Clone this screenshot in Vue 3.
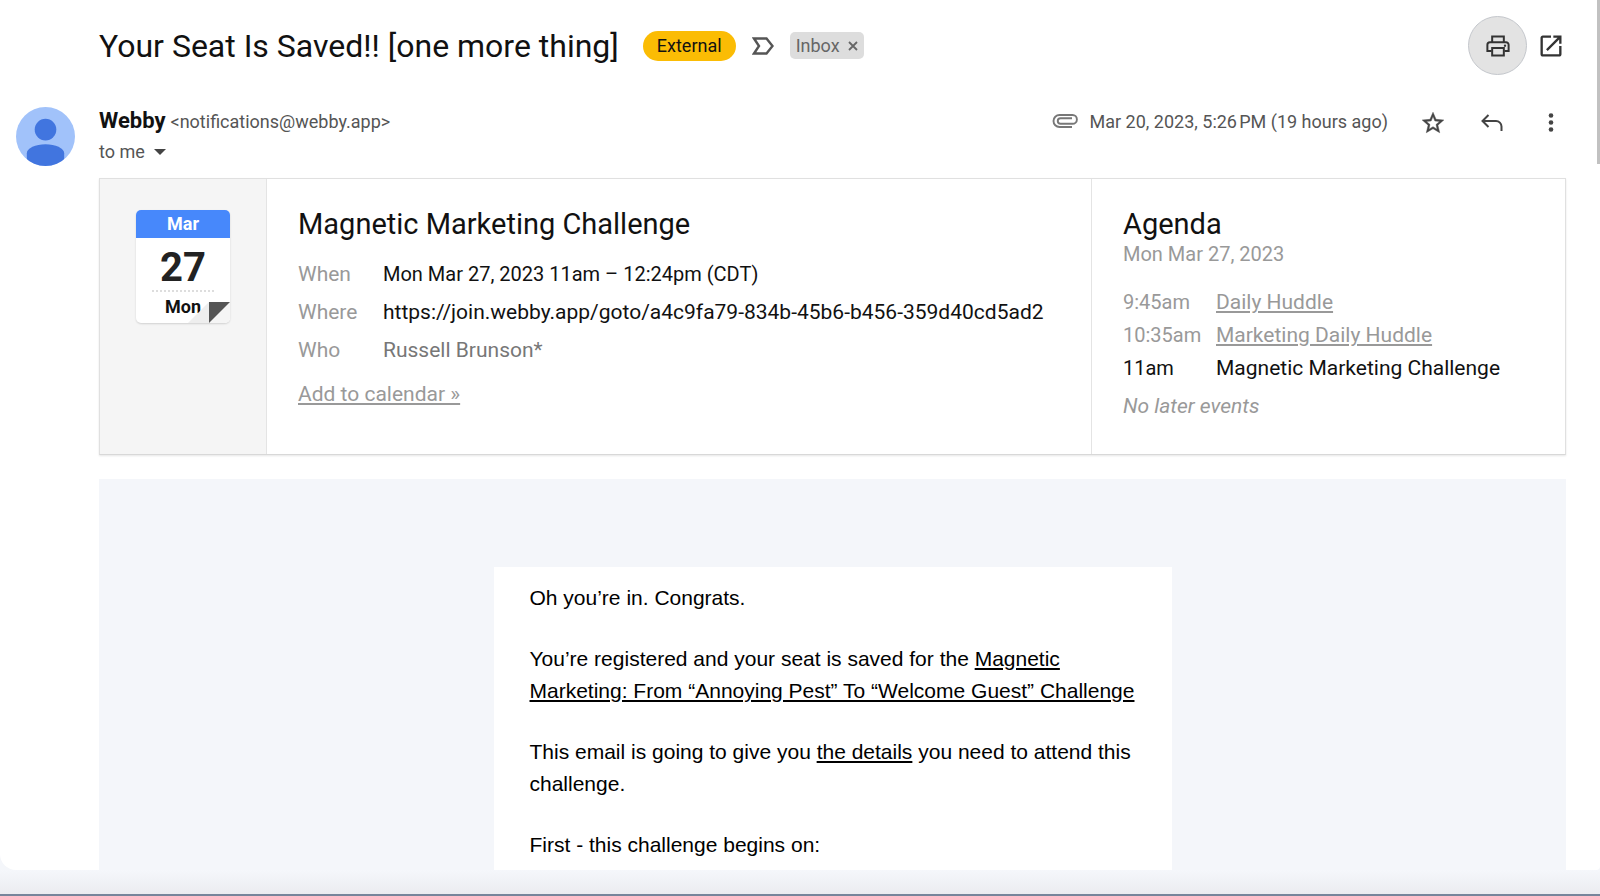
<template>
  <div class="mail">
    <main class="thread">
      <header class="subject-row">
        <h1 class="subject">{{ subject }}</h1>
        <span class="chip-external">External</span>
        <button class="icon-button marker" type="button" aria-label="Mark as important">
          <svg width="22" height="18" viewBox="0 0 22 18">
            <path d="M2 1.500h12.500L20.500 9l-6 7.500H2L7 9z" fill="none" stroke="#555" stroke-width="2.400" />
          </svg>
        </button>
        <span class="chip-inbox">
          Inbox
          <button class="icon-button" type="button" aria-label="Remove Inbox label">
            <svg width="10" height="10" viewBox="0 0 10 10">
              <path d="M1 1l8 8M9 1L1 9" stroke="#666" stroke-width="1.800" />
            </svg>
          </button>
        </span>
        <div class="subject-actions">
          <button class="icon-button print" type="button" aria-label="Print all">
            <svg width="28" height="28" viewBox="0 0 24 24" fill="none" stroke="#333" stroke-width="1.700">
              <path d="M7 8V3.800h10V8M6.500 16.200H2.900V11a2.200 2.200 0 0 1 2.200-2.200h13.800a2.200 2.200 0 0 1 2.200 2.200v5.200h-3.600" />
              <path d="M7 13.800h10v6.400H7z" />
              <circle cx="18" cy="11.700" r="1" fill="#333" stroke="none" />
            </svg>
          </button>
          <button class="icon-button" type="button" aria-label="In new window">
            <svg width="28" height="28" viewBox="0 0 24 24" fill="#333">
              <path d="M19 19H5V5h7V3H5c-1.110 0-2 .900-2 2v14c0 1.100.890 2 2 2h14c1.100 0 2-.900 2-2v-7h-2v7zM14 3v2h3.590l-9.830 9.830 1.410 1.410L19 6.410V10h2V3h-7z" />
            </svg>
          </button>
        </div>
      </header>

      <section class="sender-row">
        <svg class="avatar" width="59" height="59" viewBox="0 0 60 60">
          <defs>
            <clipPath id="avatar-clip"><circle cx="30" cy="30" r="30" /></clipPath>
          </defs>
          <g clip-path="url(#avatar-clip)">
            <rect width="60" height="60" fill="#a1c2fa" />
            <circle cx="30" cy="23" r="11" fill="#4175df" />
            <path d="M11 60V47c0-5 9-9 19-9s19 4 19 9v13z" fill="#4175df" />
          </g>
        </svg>
        <div class="sender">
          <div class="sender-line">
            <strong class="sender-name">Webby</strong>
            <span>&lt;notifications@webby.app&gt;</span>
          </div>
          <button class="recipients" type="button">
            to me
            <svg width="12" height="6" viewBox="0 0 12 6"><path d="M0 0h12L6 6z" fill="#444" /></svg>
          </button>
        </div>
        <div class="message-meta">
          <svg width="26" height="14" viewBox="0 0 26 14" fill="none" stroke="#777" stroke-width="1.900">
            <path d="M20 13H7.500a6 6 0 0 1 0-12H20.500a4.300 4.300 0 0 1 0 8.800H8.500a2.700 2.700 0 0 1 0-5.500H20" />
          </svg>
          <time class="sent">Mar 20, 2023, 5:26&#8239;PM (19 hours ago)</time>
          <div class="message-actions">
            <button class="icon-button" type="button" aria-label="Star">
              <svg width="26" height="26" viewBox="0 0 24 24" fill="#444" stroke="#444" stroke-width="0.400">
                <path d="M22 9.240l-7.190-.620L12 2 9.190 8.630 2 9.240l5.460 4.730L5.820 21 12 17.270 18.180 21l-1.630-7.030L22 9.240zM12 15.400l-3.760 2.270 1-4.280-3.320-2.880 4.380-.380L12 6.100l1.710 4.040 4.380.380-3.320 2.880 1 4.280L12 15.400z" />
              </svg>
            </button>
            <button class="icon-button" type="button" aria-label="Reply">
              <svg width="26" height="26" viewBox="0 0 26 26" fill="none" stroke="#444" stroke-width="2">
                <path d="M9.500 5l-6 6 6 6M4 11h13a5.500 5.500 0 0 1 5.500 5.500V21" />
              </svg>
            </button>
            <button class="icon-button" type="button" aria-label="More">
              <svg width="26" height="26" viewBox="0 0 26 26" fill="#444">
                <circle cx="13" cy="5.500" r="2.300" />
                <circle cx="13" cy="12.500" r="2.300" />
                <circle cx="13" cy="19.500" r="2.300" />
              </svg>
            </button>
          </div>
        </div>
      </section>

      <section class="event-card">
        <div class="event-date">
          <div class="calendar">
            <div class="calendar-month">Mar</div>
            <div class="calendar-day">27</div>
            <div class="calendar-weekday">Mon</div>
            <svg class="calendar-fold" width="42" height="22" viewBox="0 0 42 22">
              <path d="M0 22L21 1v21z" fill="#eee" />
              <path d="M21 22L42 1v21z" fill="#f5f5f5" />
              <path d="M21 1h21L21 22z" fill="#555" />
            </svg>
          </div>
        </div>
        <div class="event-details">
          <h2>Magnetic Marketing Challenge</h2>
          <dl>
            <div v-for="row in details" :key="row.label" class="detail">
              <dt>{{ row.label }}</dt>
              <dd :class="row.kind">{{ row.value }}</dd>
            </div>
          </dl>
          <a class="add-link" href="#">Add to calendar »</a>
        </div>
        <div class="agenda">
          <h2>Agenda</h2>
          <p class="agenda-date">Mon Mar 27, 2023</p>
          <ul>
            <li v-for="item in agenda" :key="item.time" :class="{ current: item.current }">
              <span class="agenda-time">{{ item.time }}</span>
              <span v-if="item.current">{{ item.title }}</span>
              <a v-else href="#">{{ item.title }}</a>
            </li>
          </ul>
          <p class="agenda-end">No later events</p>
        </div>
      </section>

      <section class="message">
        <article class="paper">
          <p>Oh you’re in. Congrats.</p>
          <p>
            You’re registered and your seat is saved for the
            <u>Magnetic Marketing: From “Annoying Pest” To “Welcome Guest” Challenge</u>
          </p>
          <p>This email is going to give you <u>the details</u> you need to attend this challenge.</p>
          <p>First - this challenge begins on:</p>
        </article>
      </section>
      <div class="scroll-thumb"></div>
    </main>
    <footer class="bottom-bar"></footer>
  </div>
</template>

<script setup>
const subject = 'Your Seat Is Saved!! [one more thing]';

const details = [
  { label: 'When', value: 'Mon Mar 27, 2023 11am – 12:24pm (CDT)', kind: 'date' },
  { label: 'Where', value: 'https://join.webby.app/goto/a4c9fa79-834b-45b6-b456-359d40cd5ad2', kind: 'link' },
  { label: 'Who', value: 'Russell Brunson*', kind: 'muted' }
];

const agenda = [
  { time: '9:45am', title: 'Daily Huddle' },
  { time: '10:35am', title: 'Marketing Daily Huddle' },
  { time: '11am', title: 'Magnetic Marketing Challenge', current: true }
];
</script>

<style>
body {
  margin: 0;
  background: #f4f6fa;
}
</style>

<style scoped>
* {
  box-sizing: border-box;
}

.mail {
  display: flex;
  flex-direction: column;
  height: 100vh;
  font-family: Roboto, sans-serif;
  color: #111;
}

.thread {
  position: relative;
  flex: 1;
  min-height: 0;
  display: flex;
  flex-direction: column;
  overflow: hidden;
  background: #fff;
  border-radius: 0 0 4px 16px;
}

h1,
h2,
p,
ul,
dl,
dd {
  margin: 0;
  padding: 0;
  font-weight: 400;
}

button {
  font-family: inherit;
  cursor: pointer;
}

svg {
  display: block;
}

.icon-button {
  padding: 0;
  border: 0;
  background: none;
}

.subject-row {
  flex: none;
  display: flex;
  align-items: center;
  height: 91px;
  padding: 0 35px 0 99px;
}

.subject {
  font-size: 32px;
  line-height: 40px;
}

.chip-external {
  margin-left: 24px;
  padding: 0 14px;
  border-radius: 15px;
  background: #fbbc04;
  font-size: 18px;
  line-height: 30px;
}

.marker {
  margin: 0 16px;
}

.chip-inbox {
  display: flex;
  align-items: center;
  gap: 8px;
  padding: 0 6px;
  border-radius: 5px;
  background: #ddd;
  color: #666;
  font-size: 18px;
  line-height: 27px;
}

.subject-actions {
  display: flex;
  align-items: center;
  gap: 10px;
  margin-left: auto;
}

.print {
  display: flex;
  align-items: center;
  justify-content: center;
  width: 59px;
  height: 59px;
  border: 1px solid #c4c7cc;
  border-radius: 50%;
  background: #e3e3e3;
}

.sender-row {
  flex: none;
  display: flex;
  align-items: flex-start;
  height: 87px;
  padding: 15px 36px 0 16px;
  color: #555;
  font-size: 18px;
}

.avatar {
  margin-top: 1px;
}

.sender {
  margin-left: 24px;
}

.sender-line {
  display: flex;
  align-items: baseline;
  gap: 5px;
  line-height: 30px;
}

.sender-name {
  color: #111;
  font-size: 22px;
}

.recipients {
  display: flex;
  align-items: center;
  gap: 9px;
  padding: 0;
  border: 0;
  background: none;
  color: #555;
  font-size: 18px;
  line-height: 30px;
}

.message-meta {
  display: flex;
  align-items: center;
  gap: 11px;
  height: 30px;
  margin-left: auto;
}

.message-actions {
  display: flex;
  gap: 33px;
  margin-left: 21px;
  padding-top: 4px;
}

.event-card {
  flex: none;
  display: flex;
  margin: 0 34px 0 99px;
  border: 1px solid #e0e0e0;
  border-bottom-color: #d8d8d8;
  box-shadow: 0 1px 2px rgba(0, 0, 0, 0.1);
  color: #999;
  font-size: 21px;
}

h2 {
  color: #111;
  font-size: 29px;
  line-height: 32px;
}

.event-date {
  width: 167px;
  padding: 31px 36px;
  border-right: 1px solid #e4e4e4;
  background: #f5f5f5;
}

.calendar {
  position: relative;
  height: 113px;
  overflow: hidden;
  border-radius: 5px;
  background: #fff;
  box-shadow: 0 1px 2px rgba(0, 0, 0, 0.15);
  color: #111;
  font-size: 18px;
  font-weight: 700;
  text-align: center;
}

.calendar-month {
  background: #4788fb;
  color: #fff;
  line-height: 28px;
}

.calendar-day {
  margin: 0 16px;
  padding-top: 8px;
  border-bottom: 2px dotted #ddd;
  color: #222;
  font-size: 40px;
  line-height: 44px;
}

.calendar-weekday {
  line-height: 30px;
}

.calendar-fold {
  position: absolute;
  right: 0;
  bottom: 0;
}

.event-details {
  flex: 1;
  padding: 29px 31px 44px;
}

.event-details dl {
  margin-top: 15px;
}

.detail {
  display: flex;
  line-height: 38px;
}

.detail dt {
  width: 85px;
}

.detail dd {
  color: #111;
}

.detail .muted {
  color: #777;
}

.date,
.agenda-date,
.agenda-time {
  font-size: 20px;
}

.add-link {
  display: inline-block;
  margin-top: 9px;
  color: #999;
  line-height: 32px;
}

.agenda {
  width: 474px;
  padding: 29px 31px;
  border-left: 1px solid #e4e4e4;
}

.agenda-date {
  line-height: 28px;
}

.agenda ul {
  margin-top: 18px;
  list-style: none;
}

.agenda li {
  display: flex;
  line-height: 33px;
}

.agenda-time {
  width: 93px;
}

.agenda a {
  color: #999;
}

.agenda .current {
  color: #111;
}

.agenda-end {
  margin-top: 5px;
  font-style: italic;
  line-height: 32px;
}

.message {
  flex: 1 0 auto;
  display: flex;
  justify-content: center;
  margin: 24px 34px 0 99px;
  padding-top: 88px;
  background: #f4f6fa;
}

.paper {
  width: 678px;
  padding: 15px 20px 15px 36px;
  background: #fff;
  color: #000;
  font-family: 'Liberation Sans', Arial, sans-serif;
  font-size: 21px;
  line-height: 32px;
}

.paper p + p {
  margin-top: 29px;
}

.scroll-thumb {
  position: absolute;
  top: 0;
  right: 0;
  width: 3px;
  height: 164px;
  background: #c1c1c1;
}

.bottom-bar {
  flex: none;
  height: 26px;
  border-bottom: 2px solid #77859b;
  background: linear-gradient(#f5f7fb, #ebecf0);
}
</style>
